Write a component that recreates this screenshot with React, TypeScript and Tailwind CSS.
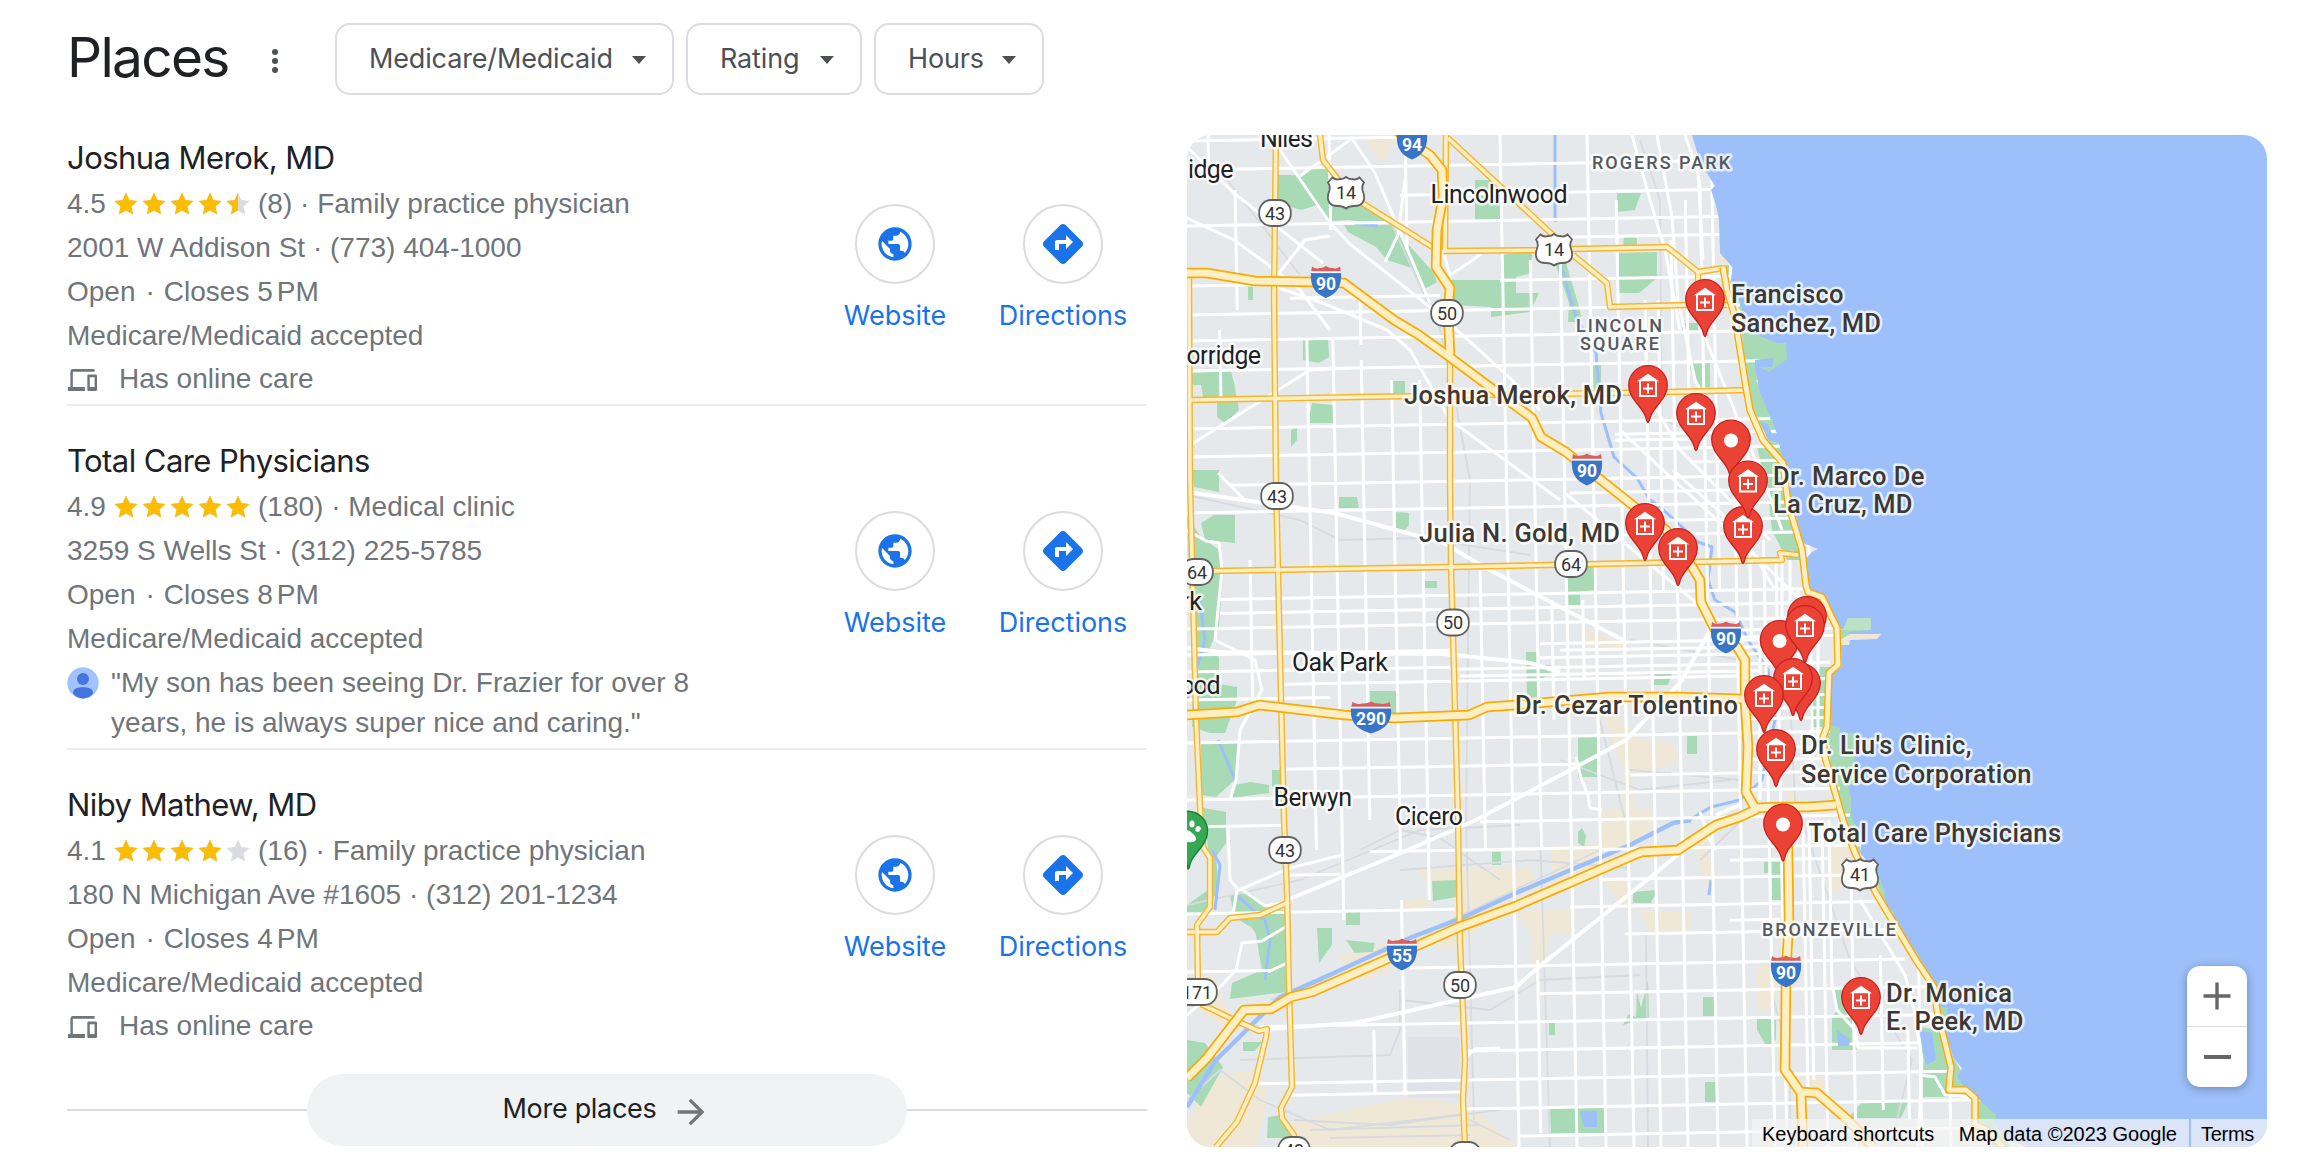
import type { ReactNode } from 'react';
import { MdArrowForward, MdDirections, MdPublic } from 'react-icons/md';

type Place = {
  name: string;
  rating: string;
  fill: number;
  reviews: string;
  kind: string;
  address: string;
  closes: string;
  quote?: [string, string];
  box: string;
};

const places: Place[] = [
  {
    name: 'Joshua Merok, MD',
    rating: '4.5',
    fill: 4.5,
    reviews: '(8)',
    kind: 'Family practice physician',
    address: '2001 W Addison St · (773) 404-1000',
    closes: '5',
    box: 'h-[270px] border-b-2',
  },
  {
    name: 'Total Care Physicians',
    rating: '4.9',
    fill: 5,
    reviews: '(180)',
    kind: 'Medical clinic',
    address: '3259 S Wells St · (312) 225-5785',
    closes: '8',
    quote: ['"My son has been seeing Dr. Frazier for over 8', 'years, he is always super nice and caring."'],
    box: 'h-[344px] border-b-2 pt-[33px]',
  },
  {
    name: 'Niby Mathew, MD',
    rating: '4.1',
    fill: 4,
    reviews: '(16)',
    kind: 'Family practice physician',
    address: '180 N Michigan Ave #1605 · (312) 201-1234',
    closes: '4',
    box: 'h-[302px] pt-[33px]',
  },
];

const STAR = 'M12 0.6l3.4 7.5 8.2.9-6.1 5.5 1.7 8.1L12 18.5l-7.2 4.1 1.7-8.1L.4 9l8.2-.9z';

function Stars({ value }: { value: number }) {
  return (
    <span className="ml-[8px] mr-[4px] flex w-[140px] gap-[4px]">
      {[0, 1, 2, 3, 4].map((i) => (
        <svg key={i} viewBox="0 0 24 24" className="h-6 w-6">
          <path d={STAR} fill="#dadce0" />
          {value - i >= 1 && <path d={STAR} fill="#fbbc04" />}
          {value - i === 0.5 && <path d="M12 0.6v17.9l-7.2 4.1 1.7-8.1L.4 9l8.2-.9z" fill="#fbbc04" />}
        </svg>
      ))}
    </span>
  );
}

function Action({ label, children }: { label: string; children: ReactNode }) {
  return (
    <div className="flex w-[168px] flex-col items-center text-[#1a73e8]">
      <div className="flex h-20 w-20 items-center justify-center rounded-full border-2 border-[#dadce0]">{children}</div>
      <span className="mt-[15px] font-[Inter,sans-serif] text-[27px] leading-[34px]">{label}</span>
    </div>
  );
}

function PlaceRow({ place }: { place: Place }) {
  return (
    <div className={`flex border-[#ebebeb] ${place.box}`}>
      <div className="min-w-0 flex-1 whitespace-nowrap text-[28px] leading-[44px] text-[#70757a]">
        <div className="mb-[3px] font-[Inter,sans-serif] text-[31px] leading-[43px] tracking-[-0.55px] text-[#202124]">
          {place.name}
        </div>
        <div className="flex items-center">
          <span className="w-[39px]">{place.rating}</span>
          <Stars value={place.fill} />
          <span>
            {place.reviews} · {place.kind}
          </span>
        </div>
        <div>{place.address}</div>
        <div>
          Open<span className="ml-[10px] mr-[9px]">·</span>Closes {place.closes}
          <span className="ml-[4px]">PM</span>
        </div>
        <div>Medicare/Medicaid accepted</div>
        {place.quote ? (
          <div className="mt-[2px] flex leading-[40px]">
            <svg viewBox="0 0 32 32" className="mt-[4px] mr-[12px] h-8 w-8">
              <circle cx="16" cy="16" r="15.7" fill="#a0c3ff" />
              <circle cx="16" cy="12" r="6" fill="#4374e0" />
              <path d="M6 26.5C6 21.5 10 20.3 16 20.3s10 1.2 10 6.2c-2.6 3.2-6 4.9-10 4.9s-7.4-1.7-10-4.9z" fill="#4374e0" />
            </svg>
            <div>
              {place.quote[0]}
              <br />
              {place.quote[1]}
            </div>
          </div>
        ) : (
          <div className="-mt-px flex items-center">
            <svg viewBox="0 4 24 16" preserveAspectRatio="none" className="ml-[1px] mr-[22px] mt-[1px] h-[22px] w-[29px]" fill="#70757a">
              <path d="M4 6h18V4H4c-1.1 0-2 .9-2 2v11H0v3h14v-3H4V6zm19 2h-6c-.55 0-1 .45-1 1v10c0 .55.45 1 1 1h6c.55 0 1-.45 1-1V9c0-.55-.45-1-1-1zm-1 9h-4v-7h4v7z" />
            </svg>
            Has online care
          </div>
        )}
      </div>
      <div className={`flex ${place.quote ? 'pt-[72px]' : place.box.includes('pt') ? 'pt-[52px]' : 'pt-[68px]'}`}>
        <Action label="Website">
          <MdPublic size={40} />
        </Action>
        <Action label="Directions">
          <MdDirections size={48} />
        </Action>
      </div>
    </div>
  );
}

/* ---------- map ---------- */

const water =
  'M1691 130L1692 135L1700 162L1715 186L1711 190L1716 205L1719 220L1720 253L1733 268L1730 283L1740 302L1750 332L1777 343L1786 343L1787 359L1769 372L1760 367L1772 367L1774 358L1755 360L1755 367L1760 393L1772 420L1777 434L1772 434L1768 424L1760 422L1768 440L1779 443L1783 460L1788 490L1799 527L1803 543L1818 549L1812 552L1802 563L1806 587L1811 592L1823 597L1839 628L1843 630L1848 618L1871 618L1871 630L1848 632L1850 634L1881 634L1877 639L1850 640L1849 645L1841 645L1842 667L1831 675L1831 725L1840 728L1839 743L1843 753L1848 733L1857 733L1857 747L1852 770L1857 783L1848 786L1851 798L1851 815L1862 840L1860 853L1878 873L1885 893L1884 903L1894 912L1892 920L1917 953L1925 967L1934 983L1941 1007L1948 1007L1944 1027L1953 1057L1962 1068L1957 1077L1966 1090L1976 1097L1996 1115L1994 1122L2005 1137L2033 1150L2300 1150L2300 130Z';

const parks = [
  '1278,175 1301,175 1312,167 1326,167 1337,180 1337,190 1366,205 1394,225 1348,220 1330,221 1317,205 1301,210 1278,203',
  '1344,225 1391,225 1398,233 1416,253 1434,273 1437,282 1423,290 1412,268 1387,260 1376,247 1348,232',
  '1436,260 1450,280 1503,280 1503,255 1532,250 1532,273 1516,277 1516,293 1539,293 1530,312 1491,317 1491,307 1455,305',
  '1475,180 1500,180 1500,220 1475,220',
  '1617,193 1641,193 1635,210 1617,212',
  '1619,253 1657,252 1657,278 1639,293 1619,293',
  '1624,236 1637,238 1637,247 1623,248',
  '1303,337 1328,337 1329,357 1319,363 1303,360',
  '1191,373 1231,371 1234,383 1239,410 1225,423 1217,417 1217,402 1203,397 1201,385 1191,385',
  '1312,403 1333,405 1333,423 1308,423',
  '1392,381 1405,381 1405,393 1392,393',
  '1592,365 1601,365 1601,383 1594,393',
  '1688,363 1710,363 1710,387 1699,388',
  '1682,323 1698,323 1698,332 1682,332',
  '1248,285 1253,285 1253,300 1248,300',
  '1291,430 1297,427 1297,440 1291,447',
  '1555,263 1566,263 1580,310 1582,322 1568,322 1569,303',
  '1192,470 1219,470 1219,492 1194,487',
  '1201,523 1214,515 1235,515 1235,543 1205,540',
  '1187,517 1201,537 1219,550 1223,573 1219,627 1209,650 1219,657 1219,673 1212,683 1237,687 1237,700 1225,733 1210,733 1192,727 1194,650 1190,600',
  '1201,743 1239,743 1235,780 1216,797 1201,795',
  '1234,785 1251,782 1269,785 1269,793 1230,798',
  '1272,770 1282,770 1282,787 1272,787',
  '1339,497 1357,497 1359,508 1339,508',
  '1396,512 1409,513 1409,525 1403,532 1396,528',
  '1425,581 1437,581 1437,588 1425,588',
  '1568,567 1594,567 1594,590 1580,592 1580,605 1568,605',
  '1370,691 1397,691 1397,715 1370,715',
  '1526,652 1536,652 1539,665 1552,665 1552,672 1539,680 1539,700 1527,700',
  '1578,737 1597,737 1597,777 1578,777',
  '1655,673 1672,673 1668,685 1653,685',
  '1687,736 1697,736 1697,754 1687,754',
  '1659,772 1671,772 1671,776 1659,776',
  '1203,808 1226,812 1226,843 1216,857 1219,890 1201,915 1187,915 1187,905 1208,890 1208,850',
  '1230,895 1251,893 1266,907 1284,910 1287,927 1262,942 1251,927 1234,917',
  '1255,930 1287,920 1287,992 1230,999 1232,983 1262,970',
  '1317,928 1332,928 1332,945 1319,963',
  '1346,912 1360,912 1360,925 1346,925',
  '1346,940 1375,943 1373,952 1355,953',
  '1432,881 1457,880 1457,897 1433,901',
  '1492,852 1501,852 1501,865 1492,865',
  '1578,832 1582,828 1586,836 1584,847 1578,843',
  '1633,892 1657,890 1651,903 1633,903',
  '1703,997 1716,997 1716,1016 1703,1016',
  '1705,1082 1717,1082 1717,1102 1705,1102',
  '1550,1107 1605,1106 1606,1133 1551,1133',
  '1549,1022 1555,1022 1555,1035 1549,1035',
  '1637,990 1641,1008 1648,980 1649,1017 1623,1025 1629,1014 1636,1017',
  '1243,1042 1262,1042 1255,1051 1243,1051',
  '1187,1040 1205,1043 1223,1067 1201,1107 1187,1093',
  '1268,1117 1282,1115 1294,1138 1267,1138',
  '1764,862 1783,862 1783,900 1772,900 1772,873 1764,873',
  '1833,988 1851,988 1855,1017 1857,1050 1832,1050 1832,1018 1837,1010',
  '1757,1018 1776,1020 1776,1040 1767,1047 1757,1030',
  '1919,1027 1941,1030 1953,1057 1976,1097 1923,1097 1923,1070',
  '1851,1115 1862,1102 1909,1100 1901,1118 1853,1118',
  '1757,447 1780,443 1783,460 1792,500 1801,527 1803,560 1787,560 1772,530 1768,493',
  '1723,265 1736,265 1760,330 1800,340 1790,380 1756,380 1780,430 1790,450 1776,455 1748,400 1740,310',
  '1816,667 1831,667 1831,727 1811,727 1809,700',
  '1828,720 1850,728 1860,750 1860,860 1840,810 1826,757',
  '1862,850 1880,865 1900,915 1950,1000 1950,1020 1936,1015 1925,975 1890,915',
  '1840,618 1880,618 1880,632 1838,640',
  '1975,1095 2000,1115 2010,1150 1996,1150 1978,1125',
];

const sand = [
  '1365,135 1398,135 1382,163 1370,150',
  '1418,870 1530,867 1541,890 1523,893 1480,928 1451,950 1436,948 1458,900 1432,893',
  '1551,847 1601,843 1601,877 1551,890',
  '1598,810 1651,810 1651,830 1626,847 1600,847',
  '1601,880 1626,880 1634,910 1690,912 1690,930 1650,935 1640,912 1620,905 1612,890',
  '1537,910 1571,910 1571,933 1550,933 1544,970 1532,970 1532,935 1516,912',
  '1404,900 1430,897 1425,912 1404,910',
  '1292,1122 1405,1098 1437,1100 1476,1110 1519,1147 1291,1147',
  '1187,1125 1209,1077 1251,1070 1266,1083 1266,1110 1255,1147 1187,1147',
  '1582,627 1623,643 1623,650 1587,647',
  '1604,715 1618,715 1640,740 1673,743 1680,760 1662,767 1632,777 1634,818 1620,818 1625,770 1612,745',
  '1705,836 1717,880 1709,890 1695,850',
  '1830,847 1851,847 1841,890 1830,893',
  '1786,788 1797,788 1797,813 1788,813',
  '1758,965 1778,965 1774,1010 1757,1010',
  '1802,1074 1822,1074 1827,1095 1812,1090',
  '1720,252 1734,266 1731,274 1719,260',
  '1750,332 1777,343 1775,351 1752,338',
  '1187,975 1215,975 1222,1000 1240,1030 1222,1027 1187,1000',
  '1337,958 1400,938 1400,965 1370,980 1350,975',
];

// Streets run almost straight; x is given at the top edge, y at the left edge.
const cols: [number, number, number][] = [
  [1208, 135, 170], [1234, 190, 310], [1216, 330, 400], [1242, 560, 700], [1303, 340, 850], [1329, 340, 920],
  [1329, 135, 230], [1357, 290, 345], [1357, 360, 820], [1357, 1030, 1095], [1387, 380, 850], [1387, 1040, 1095],
  [1415, 380, 900], [1405, 135, 250], [1387, 900, 1095], [1472, 570, 850], [1500, 135, 1147], [1528, 260, 850],
  [1522, 960, 1133], [1558, 250, 1147], [1543, 600, 720], [1574, 600, 680], [1587, 135, 980], [1587, 980, 1147],
  [1615, 200, 1147], [1642, 300, 1147], [1655, 300, 590], [1669, 240, 1147], [1684, 200, 400], [1699, 180, 1147],
  [1711, 180, 590], [1728, 420, 1147], [1728, 200, 300], [1742, 440, 640], [1756, 540, 1147], [1768, 560, 1147],
  [1790, 820, 1090], [1796, 820, 1080], [1801, 540, 790], [1809, 820, 1147], [1816, 820, 990], [1837, 860, 1147],
  [1865, 955, 1110], [1891, 1030, 1120], [1903, 960, 1147], [1932, 1090, 1147],
];

const rows: [number, number, number][] = [
  [141, 1187, 1410], [170, 1187, 1700], [199, 1400, 1710], [226, 1187, 1730], [244, 1560, 1730], [286, 1190, 1300],
  [286, 1500, 1730], [300, 1290, 1440], [315, 1187, 1740], [341, 1187, 1750], [371, 1187, 1760], [429, 1187, 1770],
  [457, 1187, 1780], [442, 1615, 1780], [448, 1615, 1700], [471, 1690, 1790], [486, 1230, 1800], [500, 1570, 1800],
  [513, 1187, 1800], [529, 1640, 1800], [543, 1600, 1800], [600, 1220, 1810], [614, 1220, 1820], [629, 1187, 1835],
  [655, 1187, 1450], [672, 1187, 1450], [686, 1280, 1740], [700, 1187, 1330], [743, 1187, 1830], [771, 1282, 1580],
  [783, 1630, 1840], [800, 1187, 1840], [827, 1187, 1287], [827, 1480, 1850], [855, 1370, 1600], [857, 1600, 1870],
  [877, 1287, 1340], [887, 1600, 1880], [914, 1187, 1455], [914, 1570, 1890], [942, 1625, 1895], [972, 1187, 1270],
  [972, 1410, 1905], [1000, 1540, 1930], [1028, 1260, 1940], [1056, 1467, 1920], [1085, 1255, 1950],
  [1097, 1290, 1460], [1114, 1460, 1990], [1142, 1520, 1970], [650, 1540, 1760], [657, 1560, 1760], [664, 1540, 1760],
  [674, 1450, 1830], [681, 1460, 1760], [690, 1740, 1830], [640, 1740, 1850], [647, 1740, 1840], [706, 1750, 1830],
  [719, 1750, 1830], [729, 1750, 1830], [758, 1750, 1830], [770, 1750, 1830], [870, 1730, 1830], [930, 1730, 1780],
];

const fineStreets = [
  'M1280 150L1330 223L1351 245L1430 307L1476 347L1512 380L1540 410',
  'M1187 147L1234 193L1323 263',
  'M1187 218L1234 240L1266 263L1300 290L1330 330',
  'M1276 287L1323 303L1387 330L1410 350L1450 420L1560 500',
  'M1351 137L1375 173L1430 303',
  'M1276 277L1305 240L1330 236',
  'M1300 176L1350 140',
  'M1187 447L1310 370L1350 368',
  'M1444 255L1450 275L1470 262L1486 250',
  'M1405 180L1398 235L1385 262',
  'M1565 493L1645 560L1705 610',
  'M1673 470L1740 530L1775 590',
  'M1620 430L1760 560L1800 600',
  'M1657 410L1680 450L1770 540',
  'M1705 337L1737 417L1760 470L1782 530',
  'M1657 135L1672 217L1678 300L1695 380L1715 415',
  'M1685 135L1698 173L1703 260',
  'M1632 135L1650 200L1665 250L1680 330',
  'M1187 530L1206 541L1219 543L1222 570L1215 640L1255 660L1262 690L1240 730L1236 780L1230 800',
  'M1228 827L1230 880L1239 890L1290 868L1342 855',
  'M1237 890L1232 920',
  'M1240 888L1265 906L1290 902',
  'M1287 926L1262 941L1242 943L1236 970L1222 985L1187 1015',
  'M1287 963L1268 972',
  'M1576 757L1581 778L1588 795L1590 808L1602 810',
  'M1860 900L1890 950L1905 975L1914 1010L1922 1060L1918 1147',
  'M1833 988L1837 1010L1855 1030L1858 1048L1917 1048',
  'M1920 1075L1935 1077L1945 1095L1976 1097',
  'M1218 473L1245 500L1310 511',
  'M1467 1056L1475 1049L1500 1048',
  'M1700 812L1710 840L1716 850',
  'M1782 560L1782 640M1790 560L1790 630M1798 590L1798 720M1760 640L1760 800M1818 640L1818 740',
  'M1740 640L1760 700L1760 790',
];

const wideStreets = [
  'M1187 492L1334 513L1444 543L1484 567L1623 640',
  'M1712 627L1680 683L1626 740L1576 767L1476 820L1401 853L1287 900',
  'M1680 853L1626 897L1541 965L1516 987L1355 1023L1267 1029',
  'M1740 805L1716 815',
  'M1187 648L1220 652L1444 654L1530 663L1560 672',
];

const rails = [
  'M1227 180L1300 275',
  'M1390 220L1440 330L1455 400L1470 480L1466 820L1474 1120',
  'M1187 495L1300 520L1340 540L1420 538L1530 555',
  'M1640 140L1660 200L1662 420L1690 430',
  'M1187 905L1300 880L1420 830L1520 825',
  'M1400 870L1530 860L1630 868',
  'M1270 1000L1400 955L1440 925L1600 850',
  'M1540 830L1550 1147',
  'M1646 935L1648 1147',
  'M1630 640L1740 660M1600 720L1625 820M1630 770L1740 780M1560 760L1640 790L1730 780',
  'M1240 1060L1390 1055L1400 1030L1400 990',
  'M1187 1100L1220 1070L1260 1100L1330 1130L1500 1110',
  'M1294 1120L1390 1125L1460 1115L1510 1140',
  'M1310 1130L1480 1125M1330 1138L1470 1135',
  'M1771 820L1771 990L1790 1060L1790 1147',
  'M1815 560L1790 700L1795 800L1850 960L1912 1060L1890 1147',
  'M1360 850L1400 830L1440 838L1500 880',
  'M1400 1000L1490 1010L1540 980L1640 975',
  'M1730 700L1742 720L1742 820L1700 860',
];

const rivers = [
  'M1555 135L1555 222',
  'M1559 260L1576 317L1596 353L1601 413L1614 457L1637 478L1650 500L1660 507L1680 525L1698 542L1712 547L1708 580L1715 600L1735 612L1748 640L1768 670L1775 720L1762 780L1740 800L1711 807L1689 820',
  'M1187 700L1205 640L1200 600',
  'M1218 740L1235 780',
  'M1212 850L1220 865L1215 910',
  'M1236 895L1265 920L1270 940L1265 980',
  'M1355 224L1378 226',
  'M1711 880L1709 895',
];

const canal = 'M1691 820L1673 823L1630 845L1516 893L1462 918L1412 937L1334 973L1280 997L1216 1060L1187 1107';

const arterials = [
  'M1276 135L1274 297L1276 480L1278 570L1281 697L1284 820L1287 893L1289 987L1292 1087L1281 1108L1282 1118L1294 1135L1294 1147',
  'M1189 277L1190 480L1194 637L1196 717L1200 807L1203 847L1210 858L1210 907L1197 925L1198 985',
  'M1201 1004L1230 1018L1259 1031L1267 1029L1266 1037L1255 1083L1237 1122L1216 1147',
  'M1187 932L1217 932L1230 918L1260 915L1289 902',
  'M1320 135L1323 160L1337 178L1362 203L1434 248',
  'M1444 251L1548 250L1573 249L1667 247L1698 272L1723 268',
  'M1573 255L1607 283L1610 307L1687 305L1727 305',
  'M1698 272L1698 305',
  'M1448 138L1555 237',
  'M1446 135L1445 250',
  'M1450 345L1450 480L1451 567L1454 670L1458 820L1460 943L1463 1010L1465 1060L1463 1100L1465 1147',
  'M1191 400L1359 397L1669 392L1750 390',
  'M1212 571L1451 567L1740 561L1782 560L1780 553L1798 555',
];

const drive =
  'M1723 267L1727 290L1735 317L1739 343L1746 387L1750 410L1763 440L1783 463L1788 503L1802 550L1806 585L1808 592L1822 597L1837 628L1838 665L1829 673L1827 727L1823 737L1825 757L1843 820L1855 853L1876 893L1916 960L1934 987L1937 1010L1951 1067L1949 1090L1966 1090L1975 1098L1975 1125L1987 1130L2003 1147';

const freeways = [
  'M1187 273L1207 273L1255 281L1312 282L1344 283L1394 320L1419 335L1451 358L1498 393L1532 418L1541 437L1566 452L1601 480L1635 507L1666 530L1680 550L1691 565L1700 580L1701 602L1714 628L1737 647L1745 660L1745 700L1748 747L1746 792L1755 808L1779 807L1807 807L1836 805',
  'M1783 810L1788 850L1789 920L1787 955L1786 983L1785 1070L1801 1093L1803 1147',
  'M1801 1092L1817 1093L1848 1120L1873 1147',
  'M1187 1078L1207 1058L1244 1010L1271 1009L1291 997L1312 992L1401 953L1459 927L1516 906L1641 852L1678 850L1716 825L1740 817L1757 809',
  'M1187 715L1237 712L1259 705L1344 715L1394 718L1469 715L1487 707L1516 705L1609 697L1680 697L1743 699',
  'M1396 130L1412 143L1430 155L1442 170L1443 197L1437 230L1436 267L1450 288L1448 310L1450 355',
];

type Label = [string, number, number, number];

const placeLabels: Label[] = [
  ['Francisco', 1731, 302.7, 112.5],
  ['Sanchez, MD', 1731, 331.7, 150],
  ['Joshua Merok, MD', 1404, 404, 218],
  ['Dr. Marco De', 1773, 485, 151.5],
  ['La Cruz, MD', 1773, 513, 139.5],
  ['Julia N. Gold, MD', 1419, 541.7, 201],
  ['Dr. Cezar Tolentino', 1515, 713.5, 223],
  ["Dr. Liu's Clinic,", 1801, 754, 170.5],
  ['Service Corporation', 1801, 782.7, 230.5],
  ['Total Care Physicians', 1808.5, 841.7, 252.5],
  ['Dr. Monica', 1886, 1001.7, 126],
  ['E. Peek, MD', 1886, 1029.7, 137.5],
];

const townLabels: Label[] = [
  ['Niles', 1260, 146.5, 53],
  ['idge', 1188, 177.5, 45.5],
  ['Lincolnwood', 1430.5, 203, 137],
  ['orridge', 1186.5, 364, 74.5],
  ['Oak Park', 1292, 670.5, 96],
  ['rk', 1182, 610, 20],
  ['ood', 1180.5, 694, 40],
  ['Berwyn', 1273.5, 805.5, 78.5],
  ['Cicero', 1395, 825, 68],
];

const areaLabels: Label[] = [
  ['ROGERS PARK', 1592, 169.3, 138],
  ['LINCOLN', 1576, 331.7, 86],
  ['SQUARE', 1580, 350, 79],
  ['BRONZEVILLE', 1762, 936, 134],
];

const pins: [number, number, 'house' | 'dot' | 'blank'][] = [
  [1705, 299, 'house'],
  [1648, 385, 'house'],
  [1696, 413, 'house'],
  [1731, 439.5, 'dot'],
  [1743, 526, 'house'],
  [1748, 480.5, 'house'],
  [1645, 523, 'house'],
  [1678, 548, 'house'],
  [1807, 616, 'blank'],
  [1779.6, 640, 'dot'],
  [1805, 625, 'house'],
  [1801, 683, 'blank'],
  [1793, 678, 'house'],
  [1764, 695, 'house'],
  [1776, 749, 'house'],
  [1783, 823.5, 'dot'],
  [1861, 997, 'house'],
];

function Lines({ paths, stroke, width }: { paths: string[]; stroke: string; width: number }) {
  return (
    <g fill="none" stroke={stroke} strokeWidth={width} strokeLinejoin="round">
      {paths.map((d) => (
        <path key={d} d={d} />
      ))}
    </g>
  );
}

function Labels({ items, className }: { items: Label[]; className: string }) {
  return (
    <g className={`[paint-order:stroke] ${className}`} stroke="#fff" strokeOpacity="0.75" strokeWidth="5" strokeLinejoin="round">
      {items.map(([text, x, y, w]) => (
        <text key={text} x={x} y={y} textLength={w}>
          {text}
        </text>
      ))}
    </g>
  );
}

function Pin({ x, y, kind }: { x: number; y: number; kind: string }) {
  return (
    <g transform={`translate(${x} ${y})`}>
      <path
        d="M0 37.5C-1 37.5-1.5 35-2 33C-5 21-19.3 15-19.3 0A19.3 19.3 0 0 1 19.3 0C19.3 15 5 21 2 33C1.5 35 1 37.5 0 37.5Z"
        fill="#ea4335"
        stroke="#c5221f"
        strokeWidth="1.3"
      />
      {kind === 'dot' && <circle cy="1" r="7" fill="#fff" />}
      {kind === 'house' && (
        <g fill="none" stroke="#fff" strokeWidth="2">
          <path d="M0-11.3L11-3.8H-11Z" fill="#fff" stroke="none" />
          <path d="M-8-4V11H8V-4M-5 3.5H5M0-1.5V8.5" />
        </g>
      )}
    </g>
  );
}

function StateRoute({ x, y, n, w = 33 }: { x: number; y: number; n: string; w?: number }) {
  return (
    <g transform={`translate(${x} ${y})`}>
      <rect x={-w / 2 + 0.7} y="-13" width={w - 1.4} height="26" rx="12" fill="#fff" stroke="#616161" strokeWidth="1.8" />
      <text y="6.5" textAnchor="middle" className="font-[Roboto,sans-serif] text-[18px]" fill="#333">
        {n}
      </text>
    </g>
  );
}

function UsRoute({ x, y, n }: { x: number; y: number; n: string }) {
  return (
    <g transform={`translate(${x} ${y})`}>
      <path
        d="M-13.5-15.5Q-10-12.5-6.5-14Q-3-13.5 0-16Q3-13.5 6.5-14Q10-12.5 13.5-15.5L18-10.5Q15.5-7 16.5-3Q19.5 5 17 9Q15 13 8 13Q3 13 0 15.5Q-3 13-8 13Q-15 13-17 9Q-19.5 5-16.5-3Q-15.5-7-18-10.5Z"
        fill="#fff"
        stroke="#616161"
        strokeWidth="1.8"
      />
      <text y="6" textAnchor="middle" className="font-[Roboto,sans-serif] text-[18px]" fill="#333">
        {n}
      </text>
    </g>
  );
}

function Interstate({ x, y, n, s = 1 }: { x: number; y: number; n: string; s?: number }) {
  return (
    <g transform={`translate(${x} ${y})`}>
      <g transform={`scale(${s} 1)`}>
        <path d="M-15-9.5C-16 4-12 11.5 0 16.5C12 11.5 16 4 15-9.5Z" fill="#3875c7" />
        <path d="M-14-15Q-10-12-7-13.5Q-3-13 0-15.5Q3-13 7-13.5Q10-12 14-15L15-9.5H-15Z" fill="#d9605e" />
        <path d="M-15-9.3H15" stroke="#fff" strokeWidth="1.8" />
      </g>
      <text y="8" textAnchor="middle" className="font-[Roboto,sans-serif] text-[17.5px] font-bold" fill="#fff">
        {n}
      </text>
    </g>
  );
}

function CityMap() {
  const colPaths = cols.map(([x, a, b]) => `M${x + (a - 135) * 0.0188} ${a}L${x + (b - 135) * 0.0188} ${b}`);
  const rowPaths = rows.map(([y, a, b]) => `M${a} ${y - (a - 1187) * 0.018}L${b} ${y - (b - 1187) * 0.018}`);

  return (
    <svg viewBox="1187 135 1080 1012" className="block h-full w-full">
      <rect x="1187" y="135" width="1080" height="1012" fill="#e5e9ec" />
      <g fill="#f0e8d7">
        {sand.map((p) => (
          <polygon key={p} points={p} />
        ))}
      </g>
      <polygon points="1408,1037 1459,1037 1461,1098 1408,1098" fill="#dfe2e8" />
      <g fill="#a8dab5">
        {parks.map((p) => (
          <polygon key={p} points={p} />
        ))}
      </g>
      <Lines paths={rails} stroke="#d7dbe0" width={1.8} />
      <Lines paths={rivers} stroke="#9dc0fa" width={3} />
      <Lines paths={[canal]} stroke="#9dc0fa" width={4.5} />
      <Lines paths={[...colPaths, ...rowPaths, ...fineStreets]} stroke="#fff" width={3} />
      <Lines paths={wideStreets} stroke="#fff" width={4} />
      <path d={water} fill="#9dc0fa" />
      <g fill="#a8dab5">
        <path d="M1848 618H1871V630H1843Z" fill="#bbe2c6" />
        <path d="M1847 733L1857 733L1857 748L1852 770L1857 784L1848 785L1846 765Z" />
        <path d="M1919 1030L1932 1033L1936 1060L1926 1065Z" fill="#9dc0fa" />
        <path d="M1837 1030L1850 1040L1849 1046L1838 1046ZM1580 1111H1597V1127H1584Z" fill="#9dc0fa" />
      </g>
      <path d="M1850 634H1881L1876 639H1848V645H1840V640Z" fill="#f0e8d7" />

      <Lines paths={arterials} stroke="#f9b529" width={6.4} />
      <Lines paths={arterials} stroke="#feeec3" width={3.6} />
      <Lines paths={[drive]} stroke="#f9ab00" width={7.5} />
      <Lines paths={[drive]} stroke="#feeec3" width={4.8} />
      <Lines paths={freeways} stroke="#f9ab00" width={10.5} />
      <Lines paths={freeways} stroke="#feeec3" width={7} />

      <Labels items={townLabels} className="fill-[#202124] font-[Roboto,sans-serif] text-[25px]" />
      <Labels items={areaLabels} className="fill-[#55585d] font-[Roboto,sans-serif] text-[18px] font-medium" />

      <StateRoute x={1275} y={213} n="43" />
      <StateRoute x={1447} y={313} n="50" />
      <StateRoute x={1277} y={496} n="43" />
      <StateRoute x={1571} y={564} n="64" />
      <StateRoute x={1197} y={572} n="64" />
      <StateRoute x={1453} y={622.5} n="50" />
      <StateRoute x={1285} y={850} n="43" />
      <StateRoute x={1460} y={985} n="50" />
      <StateRoute x={1197} y={992} n="171" w={41} />
      <StateRoute x={1294} y={1150} n="43" />
      <StateRoute x={1465} y={1155} n="50" />
      <UsRoute x={1346} y={193} n="14" />
      <UsRoute x={1554} y={250} n="14" />
      <UsRoute x={1860} y={875} n="41" />
      <Interstate x={1412} y={143} n="94" />
      <Interstate x={1326} y={281.5} n="90" />
      <Interstate x={1587} y={469} n="90" />
      <Interstate x={1726} y={637} n="90" />
      <Interstate x={1371} y={717} n="290" s={1.33} />
      <Interstate x={1402} y={954} n="55" />
      <Interstate x={1786} y={971} n="90" />

      <g transform="translate(1188 831)">
        <path d="M0 38C-1 24-20 17-20 0A19.5 19.5 0 0 1 19.5 0C19.5 15 5 22 2 33Q1 38 0 38Z" fill="#34a853" stroke="#188038" strokeWidth="1.5" />
        <ellipse cx="4" cy="-7" rx="2.6" ry="3.5" fill="#fff" />
        <ellipse cx="10" cy="-2" rx="2.6" ry="3" fill="#fff" transform="rotate(30 10 -2)" />
        <path d="M-8 8Q-8 3-3 0Q1-2 4 2Q9 6 8 9Q6 12 0 11Q-6 12-8 8Z" fill="#fff" />
      </g>

      <Labels items={placeLabels} className="fill-[#3c3834] font-[Roboto,sans-serif] text-[25.5px] font-medium" />
      {pins.map(([x, y, kind]) => (
        <Pin key={`${x}-${y}`} x={x} y={y} kind={kind} />
      ))}
    </svg>
  );
}

function FilterButton({ label, width }: { label: string; width: string }) {
  return (
    <button className={`flex h-[72px] items-center justify-between rounded-[15px] border-2 border-[#dadce0] pl-[32px] pr-[26px] text-[27px] tracking-[-0.15px] text-[#4d5156] ${width}`}>
      {label}
      <span className="mt-[2px] border-x-[7.5px] border-t-[8px] border-x-transparent border-t-[#4d5156]" />
    </button>
  );
}

export default function App() {
  return (
    <div className="h-[1176px] w-[2307px] overflow-hidden bg-white pl-[67px] pr-[40px] pt-[23px] font-['Liberation_Sans',Arial,sans-serif]">
      <header className="flex h-[72px] items-start font-[Inter,sans-serif]">
        <h1 className="w-[205px] text-[55px] leading-[69px] tracking-[-1.7px] text-[#202124]">Places</h1>
        <div className="mr-[57px] mt-[26px] flex flex-col gap-[3px]">
          <span className="h-1.5 w-1.5 rounded-full bg-[#4d5156]" />
          <span className="h-1.5 w-1.5 rounded-full bg-[#4d5156]" />
          <span className="h-1.5 w-1.5 rounded-full bg-[#4d5156]" />
        </div>
        <div className="flex gap-3">
          <FilterButton label="Medicare/Medicaid" width="w-[339px]" />
          <FilterButton label="Rating" width="w-[176px]" />
          <FilterButton label="Hours" width="w-[170px]" />
        </div>
      </header>

      <main className="flex gap-10 pt-[40px]">
        <section className="mt-[1px] w-[1080px]">
          {places.map((place) => (
            <PlaceRow key={place.name} place={place} />
          ))}
          <div className="mt-[22px] flex items-center">
            <div className="h-0.5 flex-1 bg-[#dadce0]" />
            <button className="flex h-[72px] w-[600px] items-center justify-center gap-[15px] rounded-full bg-[#eff3f4] pb-[1px] font-[Inter,sans-serif] text-[27px] tracking-[-0.3px] text-[#202124]">
              More places
              <MdArrowForward size={40} color="#70757a" className="mt-[4px]" />
            </button>
            <div className="h-0.5 flex-1 bg-[#dadce0]" />
          </div>
        </section>

        <section className="relative h-[1012px] w-[1080px] overflow-hidden rounded-[24px]">
          <CityMap />
          <div className="absolute right-[20px] bottom-[60px] flex h-[121px] w-[60px] flex-col rounded-[13px] bg-white shadow-[0_2px_10px_rgba(0,0,0,0.3)]">
            <div className="flex flex-1 items-center justify-center border-b border-[#dadce0]">
              <svg viewBox="0 0 28 28" className="h-7 w-7" stroke="#666" strokeWidth="3.4">
                <path d="M14 .5V27.5M.5 14H27.5" />
              </svg>
            </div>
            <div className="flex flex-1 items-center justify-center">
              <span className="h-[3.5px] w-[27px] bg-[#666]" />
            </div>
          </div>
          <div className="absolute right-0 bottom-0 flex h-7 gap-0.5 whitespace-nowrap text-[20px] leading-[30px] text-black">
            <div className="flex w-[437px] justify-between bg-[#f5f5f5]/70 pl-[10px] pr-[12px]">
              <span>Keyboard shortcuts</span>
              <span>Map data ©2023 Google</span>
            </div>
            <div className="w-[76px] bg-[#f5f5f5]/70 pl-[10px] tracking-[-0.3px]">Terms</div>
          </div>
        </section>
      </main>
    </div>
  );
}
